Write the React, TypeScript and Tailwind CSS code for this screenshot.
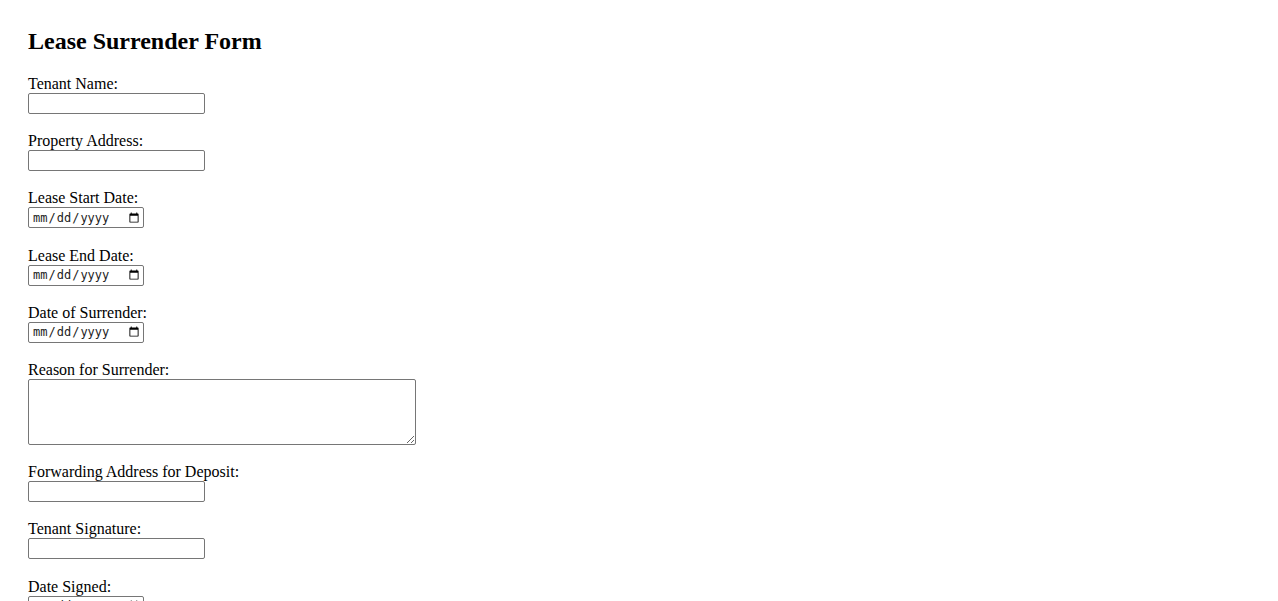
import React from "react";

const serif = { fontFamily: '"Liberation Serif", "Times New Roman", serif' };

function TextField({ label }: { label: string }) {
  return (
    <div className="mb-[18.2px]">
      <label className="block leading-[18px] text-[16px] text-black">{label}</label>
      <input
        type="text"
        className="block h-[21px] w-[177px] rounded-[2px] border border-[#767676] bg-white px-[2px] text-[13.33px] outline-none"
      />
    </div>
  );
}

function DateField({ label }: { label: string }) {
  return (
    <div className="mb-[18.2px]">
      <label className="block leading-[18px] text-[16px] text-black">{label}</label>
      <input
        type="date"
        className="block h-[21px] w-[116px] rounded-[2px] border border-[#767676] bg-white pl-[3px] pr-[1px] text-[12px] text-[#222] outline-none font-['DejaVu_Sans_Mono',monospace]"
      />
    </div>
  );
}

export default function App() {
  return (
    <div className="min-h-[601px] bg-white px-[28px] pt-[28px] text-black" style={serif}>
      <h2 className="mb-[20px] text-[24px] font-bold leading-[27px]">Lease Surrender Form</h2>
      <form>
        <TextField label="Tenant Name:" />
        <TextField label="Property Address:" />
        <DateField label="Lease Start Date:" />
        <DateField label="Lease End Date:" />
        <DateField label="Date of Surrender:" />
        <div className="mb-[18.2px]">
          <label className="block leading-[18px] text-[16px] text-black">Reason for Surrender:</label>
          <textarea className="block h-[66px] w-[388px] rounded-[2px] border border-[#767676] bg-white px-[2px] text-[13.33px] outline-none" />
        </div>
        <TextField label="Forwarding Address for Deposit:" />
        <TextField label="Tenant Signature:" />
        <DateField label="Date Signed:" />
      </form>
    </div>
  );
}
